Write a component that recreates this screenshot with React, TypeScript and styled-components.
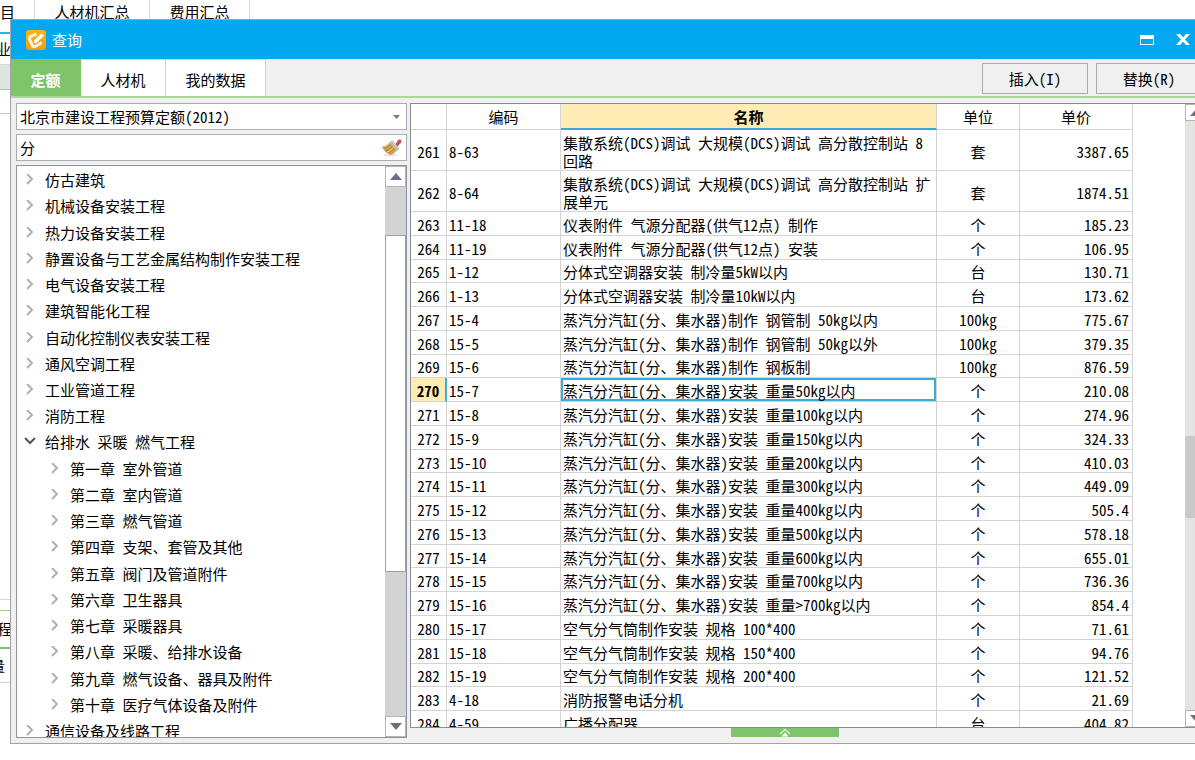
import React from "react";
import styled, { createGlobalStyle, css } from "styled-components";

const GlobalStyle = createGlobalStyle`
  *, *::before, *::after { box-sizing: border-box; }
  html, body { margin: 0; height: 100%; overflow: hidden; }
  body, button, input, select, table {
    font-family: "Noto Sans Mono CJK SC", "Noto Sans CJK SC", sans-serif;
    font-size: 15px;
    line-height: 18px;
    color: #000;
  }
  button, input, select { margin: 0; padding: 0; border: 0; border-radius: 0; background: none; }
  ul { margin: 0; padding: 0; list-style: none; }
`;

/* ---------- host application behind the dialog ---------- */

const Desktop = styled.div`
  position: relative;
  height: 100vh;
  overflow: hidden;
  background: #fff;
  display: flex;
  flex-direction: column;
`;

const HostTabs = styled.nav`
  display: flex;
  flex: none;
  height: 32px;
`;

const HostTab = styled.button<{ $width: number }>`
  width: ${(p) => p.$width}px;
  padding-bottom: 8px;
  border-right: 1px solid #dcdcdc;
`;

const HostTabLabel = styled.span`
  display: block;
  text-align: left;
`;

const HostRow = styled.div<{ $height: number; $line: string; $thick?: boolean; $fill?: string; $text?: number }>`
  flex: none;
  display: flex;
  align-items: center;
  justify-content: flex-end;
  width: 16px;
  padding-right: ${(p) => 16 - (p.$text ?? 16)}px;
  height: ${(p) => p.$height}px;
  background: ${(p) => p.$fill ?? "#fff"};
  border-bottom: ${(p) => (p.$thick ? 2 : 1)}px solid ${(p) => p.$line};
`;

const HostSpace = styled.div`
  flex: 1;
  width: 16px;
  border-bottom: 1px solid #d8d8d8;
`;

const HostEnd = styled.div`
  flex: none;
  height: 77px;
`;

/* ---------- dialog frame ---------- */

const Dialog = styled.section`
  position: absolute;
  top: 19px;
  right: -12px;
  bottom: 16px;
  left: 10px;
  display: flex;
  flex-direction: column;
  background: #f0f0f0;
  border: 1px solid #a0a4a8;
`;

const TitleBar = styled.header`
  flex: none;
  display: flex;
  align-items: center;
  height: 39px;
  padding: 0 5px 0 15px;
  gap: 6px;
  background: #02a9f1;
  color: #fff;
`;

const Title = styled.h1`
  flex: 1;
  margin: 0;
  font-size: 15px;
  line-height: 18px;
  font-weight: 400;
`;

const WindowButtons = styled.div`
  display: flex;
`;

const WindowButton = styled.button`
  display: flex;
  align-items: center;
  justify-content: center;
  width: 36px;
  height: 39px;
`;

const ToolBar = styled.div`
  flex: none;
  display: flex;
  align-items: stretch;
  height: 39px;
  padding-right: 4px;
  border-bottom: 2px solid #a9d79b;
`;

const Tab = styled.button<{ $width: number; $active?: boolean }>`
  width: ${(p) => p.$width}px;
  background: #fff;
  border-top: 1px solid #b9e5a6;
  border-right: 1px solid #b9e5a6;
  padding-top: 4px;
  ${(p) =>
    p.$active &&
    css`
      background: #7fc36b;
      border-color: #7fc36b;
      color: #fff;
      font-weight: 700;
    `}
`;

const Actions = styled.div`
  display: flex;
  gap: 8px;
  margin: 4px 0 2px auto;
`;

const ActionButton = styled.button`
  width: 106px;
  border: 1px solid #acacac;
  background: #f0f0f0;
`;

const Body = styled.div`
  flex: 1;
  min-height: 0;
  display: flex;
  gap: 3px;
  padding: 5px 0 5px 5px;
`;

/* ---------- left side ---------- */

const Side = styled.aside`
  flex: none;
  width: 391px;
  display: flex;
  flex-direction: column;
  gap: 4px;
`;

const Field = styled.label`
  flex: none;
  display: flex;
  align-items: center;
  height: 27px;
  padding: 0 3px;
  background: #fff;
  border: 1px solid #abadb3;
`;

const FieldSelect = styled.select`
  flex: 1;
  appearance: none;
  outline: 0;
`;

const FieldInput = styled.input`
  flex: 1;
  min-width: 0;
  outline: 0;
`;

const IconButton = styled.button`
  display: flex;
`;

const TreeBox = styled.div`
  flex: 1;
  min-height: 0;
  display: flex;
  background: #fff;
  border: 1px solid #8e949c;
  overflow: hidden;
`;

const Tree = styled.ul`
  flex: 1;
  display: flex;
  flex-direction: column;
  height: calc(100% + 6px);
`;

const TreeRow = styled.li`
  flex: 1;
  display: flex;
  min-height: 0;
`;

const TreeButton = styled.button<{ $level: number }>`
  flex: 1;
  display: flex;
  align-items: center;
  gap: 9px;
  padding-top: 2px;
  padding-left: ${(p) => 7 + p.$level * 25}px;
  text-align: left;
  white-space: pre;
`;

/* ---------- scroll bars ---------- */

const ScrollBar = styled.div<{ $light?: boolean }>`
  flex: none;
  display: flex;
  flex-direction: column;
  width: 21px;
  background: ${(p) => (p.$light ? "#e3e3e3" : "#d3d3d3")};
`;

const ScrollButton = styled.button<{ $height: number }>`
  flex: none;
  display: flex;
  align-items: center;
  justify-content: center;
  height: ${(p) => p.$height}px;
  background: #fff;
  border: 1px solid #b4b4b4;
`;

const Track = styled.div<{ $share: number }>`
  flex: ${(p) => p.$share} 0 0;
`;

const Thumb = styled.div<{ $share: number; $light?: boolean }>`
  flex: ${(p) => p.$share} 0 0;
  ${(p) =>
    p.$light
      ? css`
          background: #c9c9c9;
          border-radius: 2px;
        `
      : css`
          background: #fff;
          border: 1px solid #a0a0a0;
        `}
`;

/* ---------- result grid ---------- */

const Main = styled.main`
  flex: 1;
  min-width: 0;
  display: flex;
  flex-direction: column;
`;

const GridBox = styled.div`
  flex: 1;
  min-height: 0;
  display: flex;
  background: #fff;
  border: 1px solid #868b94;
  border-right: 0;
  overflow: hidden;
`;

const GridArea = styled.div`
  flex: 1;
  min-width: 0;
  height: calc(100% + 8px);
  padding-right: 52px;
`;

const Grid = styled.table`
  width: 100%;
  height: 100%;
  table-layout: fixed;
  border-collapse: separate;
  border-spacing: 0;
`;

const Col = styled.col<{ $width?: number }>`
  width: ${(p) => (p.$width ? `${p.$width}px` : "auto")};
`;

const HeadRow = styled.tr`
  height: 26px;
`;

const Head = styled.th<{ $active?: boolean }>`
  padding: 0;
  font-weight: 400;
  border-right: 1px solid #d4d4d4;
  border-bottom: 1px solid #d4d4d4;
  ${(p) =>
    p.$active &&
    css`
      padding-top: 2px;
      font-weight: 700;
      background: #ffecb5;
      border-bottom: 2px solid #38a9d8;
    `}
`;

const Row = styled.tr<{ $tall?: boolean }>`
  ${(p) => p.$tall && "height: 41px;"}
`;

const Cell = styled.td<{ $align?: "center" | "right"; $selected?: boolean }>`
  padding: 3px 2px 0;
  text-align: ${(p) => p.$align ?? "left"};
  border-right: 1px solid #d4d4d4;
  border-bottom: 1px solid #d4d4d4;
  ${(p) => p.$selected && "box-shadow: inset 0 0 0 2px #3aacd9;"}
`;

const PriceCell = styled(Cell)`
  padding-right: 3px;
`;

const NumberCell = styled.th<{ $current?: boolean }>`
  padding: 3px 0 0;
  font-weight: 400;
  border-right: 1px solid #d4d4d4;
  border-bottom: 1px solid #d4d4d4;
  ${(p) =>
    p.$current &&
    css`
      font-weight: 700;
      background: #ffecb5;
      border-right: 2px solid #3aacd9;
    `}
`;

const Footer = styled.footer`
  flex: none;
  height: 10px;
`;

const Handle = styled.button`
  display: flex;
  justify-content: center;
  width: 108px;
  height: 9px;
  margin-left: 321px;
  background: #80c36d;
`;

/* ---------- icons ---------- */

const LogoIcon = () => (
  <svg width="20" height="20" viewBox="0 0 20 20" aria-hidden="true">
    <defs>
      <linearGradient id="logo" x1="0" y1="0" x2="0" y2="1">
        <stop offset="0" stopColor="#ffb400" />
        <stop offset="1" stopColor="#f59a1c" />
      </linearGradient>
    </defs>
    <rect width="20" height="20" rx="3" fill="url(#logo)" />
    <path d="M10.5 4 4.4 6.600Q2.800 7.400 3.500 9.200L6.200 15.400Q7 17.400 9 16.400L15.800 12.600" fill="none" stroke="#fff3dc" strokeWidth="3" strokeLinejoin="round" />
    <path d="M15.400 3.200 18 6 11.200 12.600 7.600 13.200 8.200 9.800z" fill="#fff" />
    <path d="m6.600 8.400 1.200 1.600 7-6.800" fill="none" stroke="#f9ac26" strokeWidth="1" />
    <path d="m9.600 14.400 8.400-7.600" stroke="#f7a51a" strokeWidth="1" />
  </svg>
);

const MaximizeIcon = () => (
  <svg width="14" height="10" viewBox="0 0 14 10" aria-hidden="true">
    <path d="M0 0h14v10H0z M1 4v5h12V4z" fill="#fff" fillRule="evenodd" />
  </svg>
);

const CloseIcon = () => (
  <svg width="14" height="11" viewBox="0 0 14 11" aria-hidden="true">
    <path d="M0 0h4l3 3.300L10 0h4L9 5.500l5 5.500h-4L7 7.700 4 11H0l5-5.500z" fill="#fff" />
  </svg>
);

const BroomIcon = () => (
  <svg width="22" height="20" viewBox="0 0 22 20" aria-hidden="true">
    <ellipse cx="9" cy="17" rx="7" ry="1.600" fill="#e6e6e6" />
    <path d="m14 7 2.600-4.200q1.800-2.400 3.800-.6.600 1.800-.8 3L16 9z" fill="#bd5a3c" />
    <path d="m9.200 3.600 2.600-1.200 6.600 8-2.200 2.400z" fill="#a9b2b8" />
    <path d="m10.800 3.200 6.600 8.200" stroke="#e2e7ea" strokeWidth="1" />
    <path d="M9 3.800Q6.500 8 .8 8.600 3 14.500 9.600 17.200q3-1.200 6.400-4.800z" fill="#d3a455" />
    <path d="M9.400 6.500Q7 9.500 3 10.200M11.200 8.400Q9 11.600 5 12.800M13 10.400q-1.800 3-5 4.600" fill="none" stroke="#a87a38" strokeWidth="1" />
    <path d="M8.600 5.400Q6 8.600 2 9.200M12.200 9.400Q10 12.800 6.600 14" fill="none" stroke="#edcb8a" strokeWidth="1" />
  </svg>
);

const DropIcon = () => (
  <svg width="12" height="6" viewBox="0 0 12 6" aria-hidden="true">
    <path d="M2 1h7L5.500 5z" fill="#74788a" />
  </svg>
);

const ArrowIcon = ({ down }: { down?: boolean }) => (
  <svg width="12" height="7" viewBox="0 0 12 7" aria-hidden="true">
    <path d={down ? "M0 0h12L6 7z" : "M0 7h12L6 0z"} fill="#6b6f80" />
  </svg>
);

const TreeIcon = ({ open }: { open?: boolean }) => (
  <svg width="12" height="12" viewBox="0 0 12 12" aria-hidden="true">
    {open ? (
      <path d="m1 2 5 5 5-5" fill="none" stroke="#555" strokeWidth="2" />
    ) : (
      <path d="m3 0 5 5-5 5" fill="none" stroke="#b0b0b0" strokeWidth="2" />
    )}
  </svg>
);

const HandleIcon = () => (
  <svg width="12" height="9" viewBox="0 0 12 9" aria-hidden="true">
    <path d="m1 6 5-4.500L11 6" fill="none" stroke="#d5efcc" strokeWidth="1.500" />
    <path d="m6 4.500 3.500 4h-7z" fill="#fff" />
  </svg>
);

/* ---------- data ---------- */

type Node = { name: string; level?: number; open?: boolean };

const nodes: Node[] = [
  { name: "仿古建筑" },
  { name: "机械设备安装工程" },
  { name: "热力设备安装工程" },
  { name: "静置设备与工艺金属结构制作安装工程" },
  { name: "电气设备安装工程" },
  { name: "建筑智能化工程" },
  { name: "自动化控制仪表安装工程" },
  { name: "通风空调工程" },
  { name: "工业管道工程" },
  { name: "消防工程" },
  { name: "给排水 采暖 燃气工程", open: true },
  { name: "第一章 室外管道", level: 1 },
  { name: "第二章 室内管道", level: 1 },
  { name: "第三章 燃气管道", level: 1 },
  { name: "第四章 支架、套管及其他", level: 1 },
  { name: "第五章 阀门及管道附件", level: 1 },
  { name: "第六章 卫生器具", level: 1 },
  { name: "第七章 采暖器具", level: 1 },
  { name: "第八章 采暖、给排水设备", level: 1 },
  { name: "第九章 燃气设备、器具及附件", level: 1 },
  { name: "第十章 医疗气体设备及附件", level: 1 },
  { name: "通信设备及线路工程" },
];

type Item = [no: number, code: string, name: string, unit: string, price: string];

const items: Item[] = [
  [261, "8-63", "集散系统(DCS)调试 大规模(DCS)调试 高分散控制站 8回路", "套", "3387.65"],
  [262, "8-64", "集散系统(DCS)调试 大规模(DCS)调试 高分散控制站 扩展单元", "套", "1874.51"],
  [263, "11-18", "仪表附件 气源分配器(供气12点) 制作", "个", "185.23"],
  [264, "11-19", "仪表附件 气源分配器(供气12点) 安装", "个", "106.95"],
  [265, "1-12", "分体式空调器安装 制冷量5kW以内", "台", "130.71"],
  [266, "1-13", "分体式空调器安装 制冷量10kW以内", "台", "173.62"],
  [267, "15-4", "蒸汽分汽缸(分、集水器)制作 钢管制 50kg以内", "100kg", "775.67"],
  [268, "15-5", "蒸汽分汽缸(分、集水器)制作 钢管制 50kg以外", "100kg", "379.35"],
  [269, "15-6", "蒸汽分汽缸(分、集水器)制作 钢板制", "100kg", "876.59"],
  [270, "15-7", "蒸汽分汽缸(分、集水器)安装 重量50kg以内", "个", "210.08"],
  [271, "15-8", "蒸汽分汽缸(分、集水器)安装 重量100kg以内", "个", "274.96"],
  [272, "15-9", "蒸汽分汽缸(分、集水器)安装 重量150kg以内", "个", "324.33"],
  [273, "15-10", "蒸汽分汽缸(分、集水器)安装 重量200kg以内", "个", "410.03"],
  [274, "15-11", "蒸汽分汽缸(分、集水器)安装 重量300kg以内", "个", "449.09"],
  [275, "15-12", "蒸汽分汽缸(分、集水器)安装 重量400kg以内", "个", "505.4"],
  [276, "15-13", "蒸汽分汽缸(分、集水器)安装 重量500kg以内", "个", "578.18"],
  [277, "15-14", "蒸汽分汽缸(分、集水器)安装 重量600kg以内", "个", "655.01"],
  [278, "15-15", "蒸汽分汽缸(分、集水器)安装 重量700kg以内", "个", "736.36"],
  [279, "15-16", "蒸汽分汽缸(分、集水器)安装 重量>700kg以内", "个", "854.4"],
  [280, "15-17", "空气分气筒制作安装 规格 100*400", "个", "71.61"],
  [281, "15-18", "空气分气筒制作安装 规格 150*400", "个", "94.76"],
  [282, "15-19", "空气分气筒制作安装 规格 200*400", "个", "121.52"],
  [283, "4-18", "消防报警电话分机", "个", "21.69"],
  [284, "4-59", "广播分配器", "台", "404.82"],
];

const currentNo = 270;
const tallRows = [261, 262];

export default function App() {
  return (
    <>
      <GlobalStyle />
      <Desktop>
        <HostTabs>
          <HostTab $width={35}>
            <HostTabLabel>目</HostTabLabel>
          </HostTab>
          <HostTab $width={115}>人材机汇总</HostTab>
          <HostTab $width={100}>费用汇总</HostTab>
        </HostTabs>
        <HostRow $height={2} $thick $line="#2fb0e6" />
        <HostRow $height={31} $line="#d8d8d8" $text={11}>业</HostRow>
        <HostRow $height={25} $line="#b8c0bc" $fill="#dce5e0" />
        <HostRow $height={24} $line="#c8c8c8" />
        <HostSpace />
        <HostRow $height={11} $line="#9ad884" />
        <HostRow $height={38} $line="#7cc868" $thick $text={12}>程</HostRow>
        <HostRow $height={34} $line="#d0d0d0" $text={5}>量</HostRow>
        <HostEnd />

        <Dialog aria-label="查询">
          <TitleBar>
            <LogoIcon />
            <Title>查询</Title>
            <WindowButtons>
              <WindowButton aria-label="最大化">
                <MaximizeIcon />
              </WindowButton>
              <WindowButton aria-label="关闭">
                <CloseIcon />
              </WindowButton>
            </WindowButtons>
          </TitleBar>

          <ToolBar>
            <Tab $width={70} $active>定额</Tab>
            <Tab $width={85}>人材机</Tab>
            <Tab $width={100}>我的数据</Tab>
            <Actions>
              <ActionButton>插入(I)</ActionButton>
              <ActionButton>替换(R)</ActionButton>
            </Actions>
          </ToolBar>

          <Body>
            <Side>
              <Field>
                <FieldSelect aria-label="定额库">
                  <option>北京市建设工程预算定额(2012)</option>
                </FieldSelect>
                <DropIcon />
              </Field>
              <Field>
                <FieldInput aria-label="查询条件" defaultValue="分" />
                <IconButton aria-label="清空">
                  <BroomIcon />
                </IconButton>
              </Field>
              <TreeBox>
                <Tree>
                  {nodes.map((n) => (
                    <TreeRow key={n.name}>
                      <TreeButton $level={n.level ?? 0}>
                        <TreeIcon open={n.open} />
                        {n.name}
                      </TreeButton>
                    </TreeRow>
                  ))}
                </Tree>
                <ScrollBar>
                  <ScrollButton $height={21} aria-label="向上滚动">
                    <ArrowIcon />
                  </ScrollButton>
                  <Track $share={48} />
                  <Thumb $share={336} />
                  <Track $share={145} />
                  <ScrollButton $height={21} aria-label="向下滚动">
                    <ArrowIcon down />
                  </ScrollButton>
                </ScrollBar>
              </TreeBox>
            </Side>

            <Main>
              <GridBox>
                <GridArea>
                  <Grid>
                    <colgroup>
                      <Col $width={36} />
                      <Col $width={114} />
                      <Col />
                      <Col $width={83} />
                      <Col $width={113} />
                    </colgroup>
                    <thead>
                      <HeadRow>
                        <Head />
                        <Head>编码</Head>
                        <Head $active>名称</Head>
                        <Head>单位</Head>
                        <Head>单价</Head>
                      </HeadRow>
                    </thead>
                    <tbody>
                      {items.map(([no, code, name, unit, price]) => (
                        <Row key={no} $tall={tallRows.includes(no)}>
                          <NumberCell scope="row" $current={no === currentNo}>{no}</NumberCell>
                          <Cell>{code}</Cell>
                          <Cell $selected={no === currentNo}>{name}</Cell>
                          <Cell $align="center">{unit}</Cell>
                          <PriceCell $align="right">{price}</PriceCell>
                        </Row>
                      ))}
                    </tbody>
                  </Grid>
                </GridArea>
                <ScrollBar $light>
                  <ScrollButton $height={17} aria-label="向上滚动">
                    <ArrowIcon />
                  </ScrollButton>
                  <Track $share={316} />
                  <Thumb $share={82} $light />
                  <Track $share={192} />
                  <ScrollButton $height={17} aria-label="向下滚动">
                    <ArrowIcon down />
                  </ScrollButton>
                </ScrollBar>
              </GridBox>
              <Footer>
                <Handle aria-label="展开">
                  <HandleIcon />
                </Handle>
              </Footer>
            </Main>
          </Body>
        </Dialog>
      </Desktop>
    </>
  );
}
